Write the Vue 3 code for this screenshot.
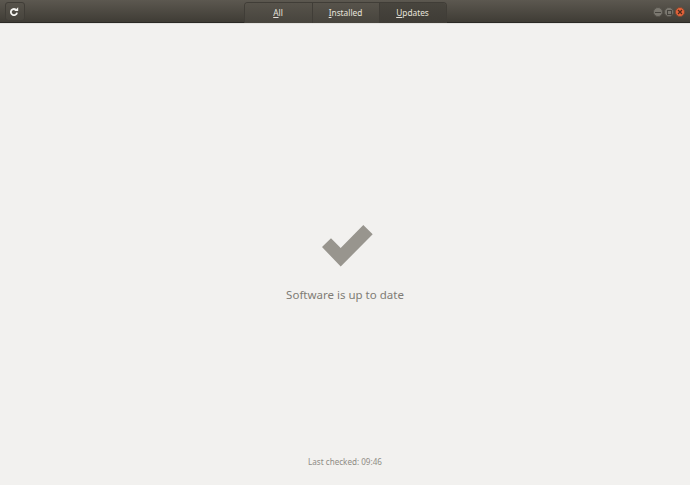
<script setup>
const tabs = [
  { key: 'A', rest: 'll', active: false },
  { key: 'I', rest: 'nstalled', active: false },
  { key: 'U', rest: 'pdates', active: true }
]
</script>

<template>
  <div class="window">
    <header class="bar">
      <div class="left">
        <button class="refresh" aria-label="Refresh">
          <svg width="10" height="10" viewBox="0 0 10 10">
            <path d="M7.4 3.2A3.1 3.1 0 1 0 8 5.6" fill="none" stroke="#f4f3f0" stroke-width="1.8" />
            <path d="M5.2 4.1L9.2 4.1L9.2 0.3Z" fill="#f4f3f0" />
          </svg>
        </button>
      </div>
      <nav class="tabs">
        <div v-for="t in tabs" :key="t.key" class="tab" :class="{ active: t.active }">
          <span><u>{{ t.key }}</u>{{ t.rest }}</span>
        </div>
      </nav>
      <div class="controls">
        <span class="ctl"><i class="dash"></i></span>
        <span class="ctl"><i class="box"></i></span>
        <span class="ctl close">
          <svg width="6" height="6" viewBox="0 0 6 6"><path d="M1 1L5 5M5 1L1 5" stroke="#4a2a1c" stroke-width="1.2" /></svg>
        </span>
      </div>
    </header>
    <main class="body">
      <div class="center">
        <svg class="check" width="52" height="44" viewBox="0 0 52 44">
          <path d="M1 24L10 15.3L19.7 25L42.3 2L51.7 11.3L19.7 43.5Z" fill="#98958e" />
        </svg>
        <p class="status">Software is up to date</p>
      </div>
      <p class="checked">Last checked: 09:46</p>
    </main>
  </div>
</template>

<style scoped>
.window {
  width: 690px;
  height: 485px;
  display: flex;
  flex-direction: column;
  background: #f2f1ef;
  font-family: "Noto Sans", "Open Sans", sans-serif;
  overflow: hidden;
}
.bar {
  flex: none;
  height: 23px;
  box-sizing: border-box;
  display: grid;
  grid-template-columns: 1fr auto 1fr;
  align-items: start;
  background: linear-gradient(#5c5850, #3f3c35);
  border-bottom: 1px solid #2b2925;
  box-shadow: 0 1px 0 #e4e3e0;
}
.left {
  padding: 2px 0 0 5px;
}
.refresh {
  width: 20px;
  height: 19px;
  padding: 0 2px 0 0;
  display: flex;
  align-items: center;
  justify-content: center;
  background: linear-gradient(#57534b, #47443d);
  border: 1px solid #403d37;
  border-radius: 3px;
}
.tabs {
  display: flex;
  height: 20px;
  margin-top: 2px;
  border: 1px solid #403d37;
  border-bottom: 0;
  border-radius: 4px 4px 0 0;
  overflow: hidden;
}
.tab {
  width: 67px;
  padding-bottom: 2px;
  display: flex;
  align-items: center;
  justify-content: center;
  color: #e6e3dc;
  font-size: 8.3px;
  background: linear-gradient(#57534b, #47443d);
  border-left: 1px solid #403d37;
  box-sizing: border-box;
}
.tab:first-child {
  border-left: 0;
}
.tab.active {
  background: linear-gradient(#48453e, #3f3c36);
}
.controls {
  justify-self: end;
  display: flex;
  gap: 1px;
  padding: 7px 5px 0 0;
}
.ctl {
  box-sizing: border-box;
  width: 10px;
  height: 10px;
  border-radius: 50%;
  background: #7b7870;
  border: 1px solid #55524b;
  display: flex;
  align-items: center;
  justify-content: center;
}
.close {
  background: #e9633a;
  border-color: #7a4c35;
}
.dash {
  width: 6px;
  height: 1px;
  background: #45433d;
}
.box {
  width: 3px;
  height: 3px;
  border: 1px solid #45433d;
}
.body {
  flex: 1;
  display: flex;
  flex-direction: column;
  align-items: center;
}
.center {
  display: flex;
  flex-direction: column;
  align-items: center;
  margin-top: 200px;
}
.check {
  display: block;
  margin-left: 5px;
}
.status {
  margin: 20px 0 0;
  font-size: 11.5px;
  line-height: 16px;
  color: #7f7c75;
}
.checked {
  margin: auto 0 17px;
  font-size: 8.1px;
  line-height: 12px;
  color: #8f8c85;
}
</style>
